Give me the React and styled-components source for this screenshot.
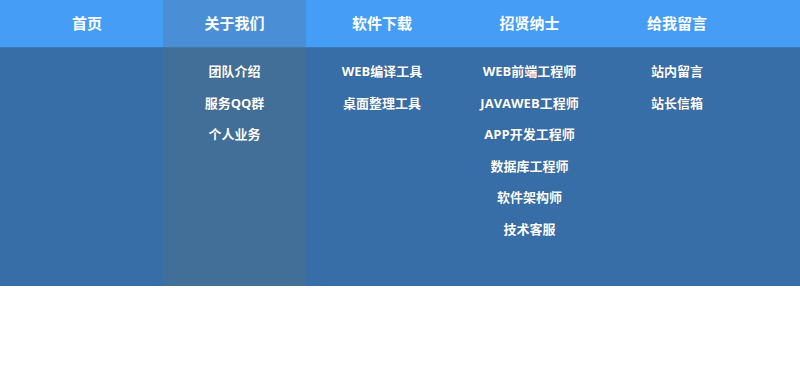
import React from 'react';
import styled, { createGlobalStyle } from 'styled-components';

const GlobalStyle = createGlobalStyle`
    body {
        margin: 0;
        background: #ffffff;
        font-family: "Open Sans", "Noto Sans CJK SC", sans-serif;
    }
    ul {
        margin: 0;
        padding: 0;
        list-style: none;
    }
`;

const Menu = styled.nav`
    display: flex;
    gap: 4.5px;
    height: 286px;
    padding-left: 15.5px;
    background: linear-gradient(
        to bottom,
        #459df5 0,
        #459df5 47px,
        #3b78b9 47px,
        #3b78b9 48px,
        #386ea7 48px
    );
`;

const Column = styled.div`
    display: flex;
    flex-direction: column;
    width: 143px;
`;

const Title = styled.a`
    display: block;
    height: 47px;
    line-height: 46px;
    text-align: center;
    font-size: 15px;
    font-weight: 700;
    color: #ffffff;
    text-decoration: none;
    background: ${props => props.active ? '#4a8fd6' : 'transparent'};
    border-bottom: 1px solid ${props => props.active ? '#45789f' : 'transparent'};
`;

const SubList = styled.ul`
    flex: 1;
    padding-top: 8px !important;
    background: ${props => props.active ? '#426f98' : 'transparent'};
`;

const SubItem = styled.li`
    height: 31.6px;
    line-height: 31.6px;
    text-align: center;
    font-size: 13px;
    font-weight: 700;
    color: #ffffff;
    white-space: nowrap;
    text-shadow: 0 0 1px rgba(0, 0, 0, 0.25);
`;

const menus = [
    { title: '首页', items: [] },
    { title: '关于我们', items: ['团队介绍', '服务QQ群', '个人业务'] },
    { title: '软件下载', items: ['WEB编译工具', '桌面整理工具'] },
    { title: '招贤纳士', items: ['WEB前端工程师', 'JAVAWEB工程师', 'APP开发工程师', '数据库工程师', '软件架构师', '技术客服'] },
    { title: '给我留言', items: ['站内留言', '站长信箱'] },
];

const App = () => {
    return (
        <>
            <GlobalStyle />
            <Menu>
                {menus.map((menu, i) => (
                    <Column key={menu.title}>
                        <Title href="#" active={i === 1 ? 1 : 0}>{menu.title}</Title>
                        <SubList active={i === 1 ? 1 : 0}>
                            {menu.items.map(item => (
                                <SubItem key={item}>{item}</SubItem>
                            ))}
                        </SubList>
                    </Column>
                ))}
            </Menu>
        </>
    );
};

export default App;
